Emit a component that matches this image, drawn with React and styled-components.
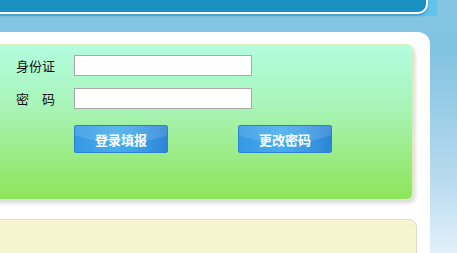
import React from 'react';
import styled, { createGlobalStyle } from 'styled-components';

const GlobalStyle = createGlobalStyle`
  html, body {
    margin: 0;
    padding: 0;
    height: 100%;
    overflow: hidden;
  }
  body {
    background: linear-gradient(180deg, #85c5e3 0%, #82c3e2 20%, #b7daef 70%, #e2f0fa 100%);
    font-family: "Noto Sans CJK SC", "Noto Sans", sans-serif;
  }
`;

const HeaderWrap = styled.div`
  width: 437px;
  height: 16px;
  background: #62c2ea;
`;

const HeaderBar = styled.div`
  margin-left: -10px;
  width: 436px;
  height: 12px;
  background: #1990c1;
  border: 2px solid #fff;
  border-top: none;
  border-left: none;
  border-bottom-right-radius: 10px;
  box-shadow: 0 2px 2px rgba(20, 90, 140, 0.35);
`;

const Panel = styled.div`
  margin: 16px 0 0 -10px;
  width: 423px;
  padding: 12px 17px 0 0;
  background: #fff;
  border-top-right-radius: 12px;
  display: flex;
  flex-direction: column;
  gap: 19px;
`;

const LoginBox = styled.div`
  height: 156px;
  box-sizing: border-box;
  padding: 10px 0 0 25px;
  border: 1px solid #dcefb8;
  border-radius: 0 6px 6px 0;
  background: linear-gradient(180deg, #b3fde0 0%, #a8f4b8 40%, #95e870 85%, #8fe55a 100%);
  box-shadow: 2px 3px 4px rgba(0, 0, 0, 0.16);
  display: flex;
  flex-direction: column;
  gap: 12px;
`;

const Row = styled.div`
  display: flex;
  align-items: center;
  height: 21px;
`;

const Label = styled.span`
  width: 58px;
  font-size: 13px;
  color: #111;
  letter-spacing: ${p => (p.$spread ? '13px' : '0')};
  white-space: nowrap;
`;

const Input = styled.input`
  width: 178px;
  height: 21px;
  box-sizing: border-box;
  border: 1px solid #a9a9a9;
  background: #fff;
  padding: 0 3px;
  outline: none;
`;

const Buttons = styled.div`
  display: flex;
  gap: 70px;
  margin: 4px 0 0 58px;
`;

const Button = styled.button`
  position: relative;
  overflow: hidden;
  width: 94px;
  height: 28px;
  padding: 0;
  border: 1px solid #2b82d2;
  border-radius: 2px;
  background: linear-gradient(90deg, #3598e4 0%, #46adec 45%, #3d9ee6 70%, #2e84d8 100%);
  color: #fff;
  font-family: "Noto Sans CJK SC", sans-serif;
  font-size: 13px;
  font-weight: bold;
  cursor: pointer;

  &::before {
    content: '';
    position: absolute;
    left: -10%;
    top: -60%;
    width: 120%;
    height: 120%;
    border-radius: 50%;
    background: rgba(255, 255, 255, 0.12);
  }

  span {
    position: relative;
  }
`;

const NoticeBox = styled.div`
  margin-right: -4px;
  height: 40px;
  border: 1px solid #dcdcc8;
  border-radius: 0 8px 0 0;
  background: #f7f5d0;
`;

export default function App() {
  return (
    <>
      <GlobalStyle />
      <HeaderWrap>
        <HeaderBar />
      </HeaderWrap>
      <Panel>
        <LoginBox>
          <Row>
            <Label>身份证</Label>
            <Input type="text" />
          </Row>
          <Row>
            <Label $spread>密码</Label>
            <Input type="password" />
          </Row>
          <Buttons>
            <Button><span>登录填报</span></Button>
            <Button><span>更改密码</span></Button>
          </Buttons>
        </LoginBox>
        <NoticeBox />
      </Panel>
    </>
  );
}
